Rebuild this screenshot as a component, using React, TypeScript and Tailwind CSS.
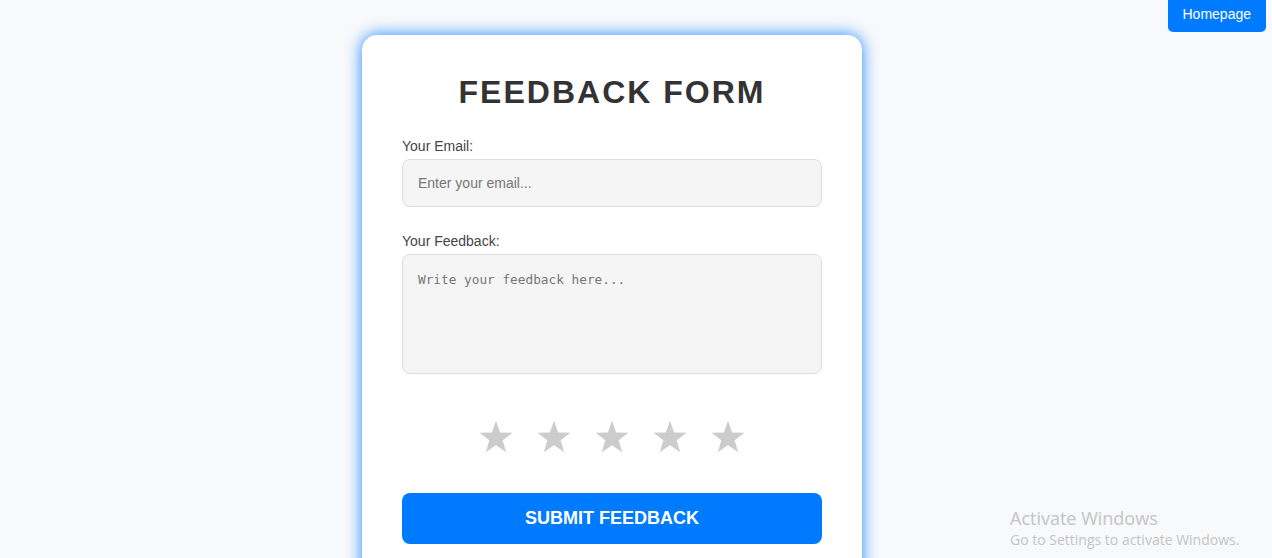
const Star = () => (
  <svg width="36" height="34" viewBox="0 0 24 23" className="block">
    <polygon points="12,0.5 14.8,8.4 23.2,8.6 16.5,13.7 18.9,21.8 12,17 5.1,21.8 7.5,13.7 0.8,8.6 9.2,8.4" fill="#cccccc" />
  </svg>
);

export default function App() {
  return (
    <div className="min-h-[558px] bg-[#f8f9fb] relative font-['Liberation_Sans',Arial,sans-serif] overflow-hidden">
      <button className="absolute right-[6px] top-[-6px] h-[38px] px-[15px] pt-[2px] bg-[#007bff] text-white text-[14px] rounded-[5px]">
        Homepage
      </button>

      <div className="flex justify-center pt-[35px] pr-[48px]">
        <div className="w-[500px] bg-white rounded-[15px] shadow-[0_0_16px_rgba(0,123,255,0.9)] p-[40px]">
          <h1 className="text-center text-[32px] font-bold tracking-[2px] text-[#333] leading-[37px] mt-[-1px]">
            FEEDBACK FORM
          </h1>

          <label className="block text-[14px] text-[#444] mt-[27px] leading-[16px]">Your Email:</label>
          <input
            type="email"
            placeholder="Enter your email..."
            className="mt-[5px] w-full h-[48px] px-[15px] bg-[#f5f5f5] border border-[#ddd] rounded-[8px] text-[14px] placeholder:text-[#757575] outline-none"
          />

          <label className="block text-[14px] text-[#444] mt-[26px] leading-[16px]">Your Feedback:</label>
          <textarea
            placeholder="Write your feedback here..."
            className="mt-[5px] block w-full h-[120px] px-[15px] py-[15px] bg-[#f5f5f5] border border-[#ddd] rounded-[8px] text-[12.75px] font-['DejaVu_Sans_Mono',monospace] placeholder:text-[#757575] outline-none resize-none"
          />

          <div className="flex justify-center gap-[22px] mt-[46px]">
            <Star />
            <Star />
            <Star />
            <Star />
            <Star />
          </div>

          <button className="mt-[39px] w-full h-[51px] bg-[#007bff] text-white text-[18px] font-bold rounded-[8px]">
            SUBMIT FEEDBACK
          </button>
        </div>
      </div>

      <div className="absolute left-[1010px] top-[506px] text-[#c4c4c4] font-['Open_Sans',sans-serif] pointer-events-none">
        <div className="text-[18px] leading-[24px]">Activate Windows</div>
        <div className="text-[14px] leading-[20px]">Go to Settings to activate Windows.</div>
      </div>
    </div>
  );
}
